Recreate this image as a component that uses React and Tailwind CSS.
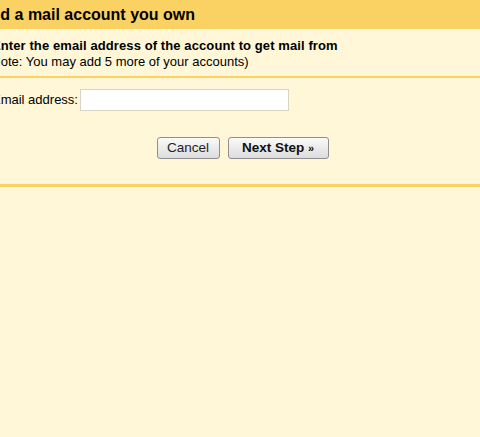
export default function App() {
  return (
    <div className="w-[480px] h-[437px] overflow-hidden bg-[#fff7d7] font-['Liberation_Sans',Arial,sans-serif] text-[13px] text-black">
      <div className="h-[29px] bg-[#fad163] flex items-center">
        <h1 className="ml-[-21px] text-[16px] font-bold whitespace-nowrap">Add a mail account you own</h1>
      </div>
      <div className="pt-[9px] pb-[6px] leading-[16px]">
        <div className="ml-[-8px] font-bold tracking-[0.1px]">Enter the email address of the account to get mail from</div>
        <div className="ml-[-13px]">(Note: You may add 5 more of your accounts)</div>
      </div>
      <div className="h-[2px] bg-[#fad163]" />
      <div className="pt-[11px] flex items-center ml-[-8px] gap-[2px]">
        <label className="whitespace-nowrap">Email address:</label>
        <input
          type="text"
          className="w-[209px] h-[22px] bg-white border border-[#d8d4c4] outline-none px-1"
        />
      </div>
      <div className="mt-[26px] flex justify-center gap-[8px] pl-[5px]">
        <button className="w-[63px] h-[22px] rounded-[3px] border border-[#8f8f8f] bg-gradient-to-b from-[#fafafa] to-[#dcdcdc] text-[13.5px] text-[#222]">
          Cancel
        </button>
        <button className="w-[101px] h-[22px] rounded-[3px] border border-[#8f8f8f] bg-gradient-to-b from-[#fafafa] to-[#dcdcdc] text-[13.5px] font-bold text-[#111]">
          Next Step <span className="text-[11px]">»</span>
        </button>
      </div>
      <div className="mt-[25px] h-[3px] bg-[#fad163]" />
    </div>
  );
}
